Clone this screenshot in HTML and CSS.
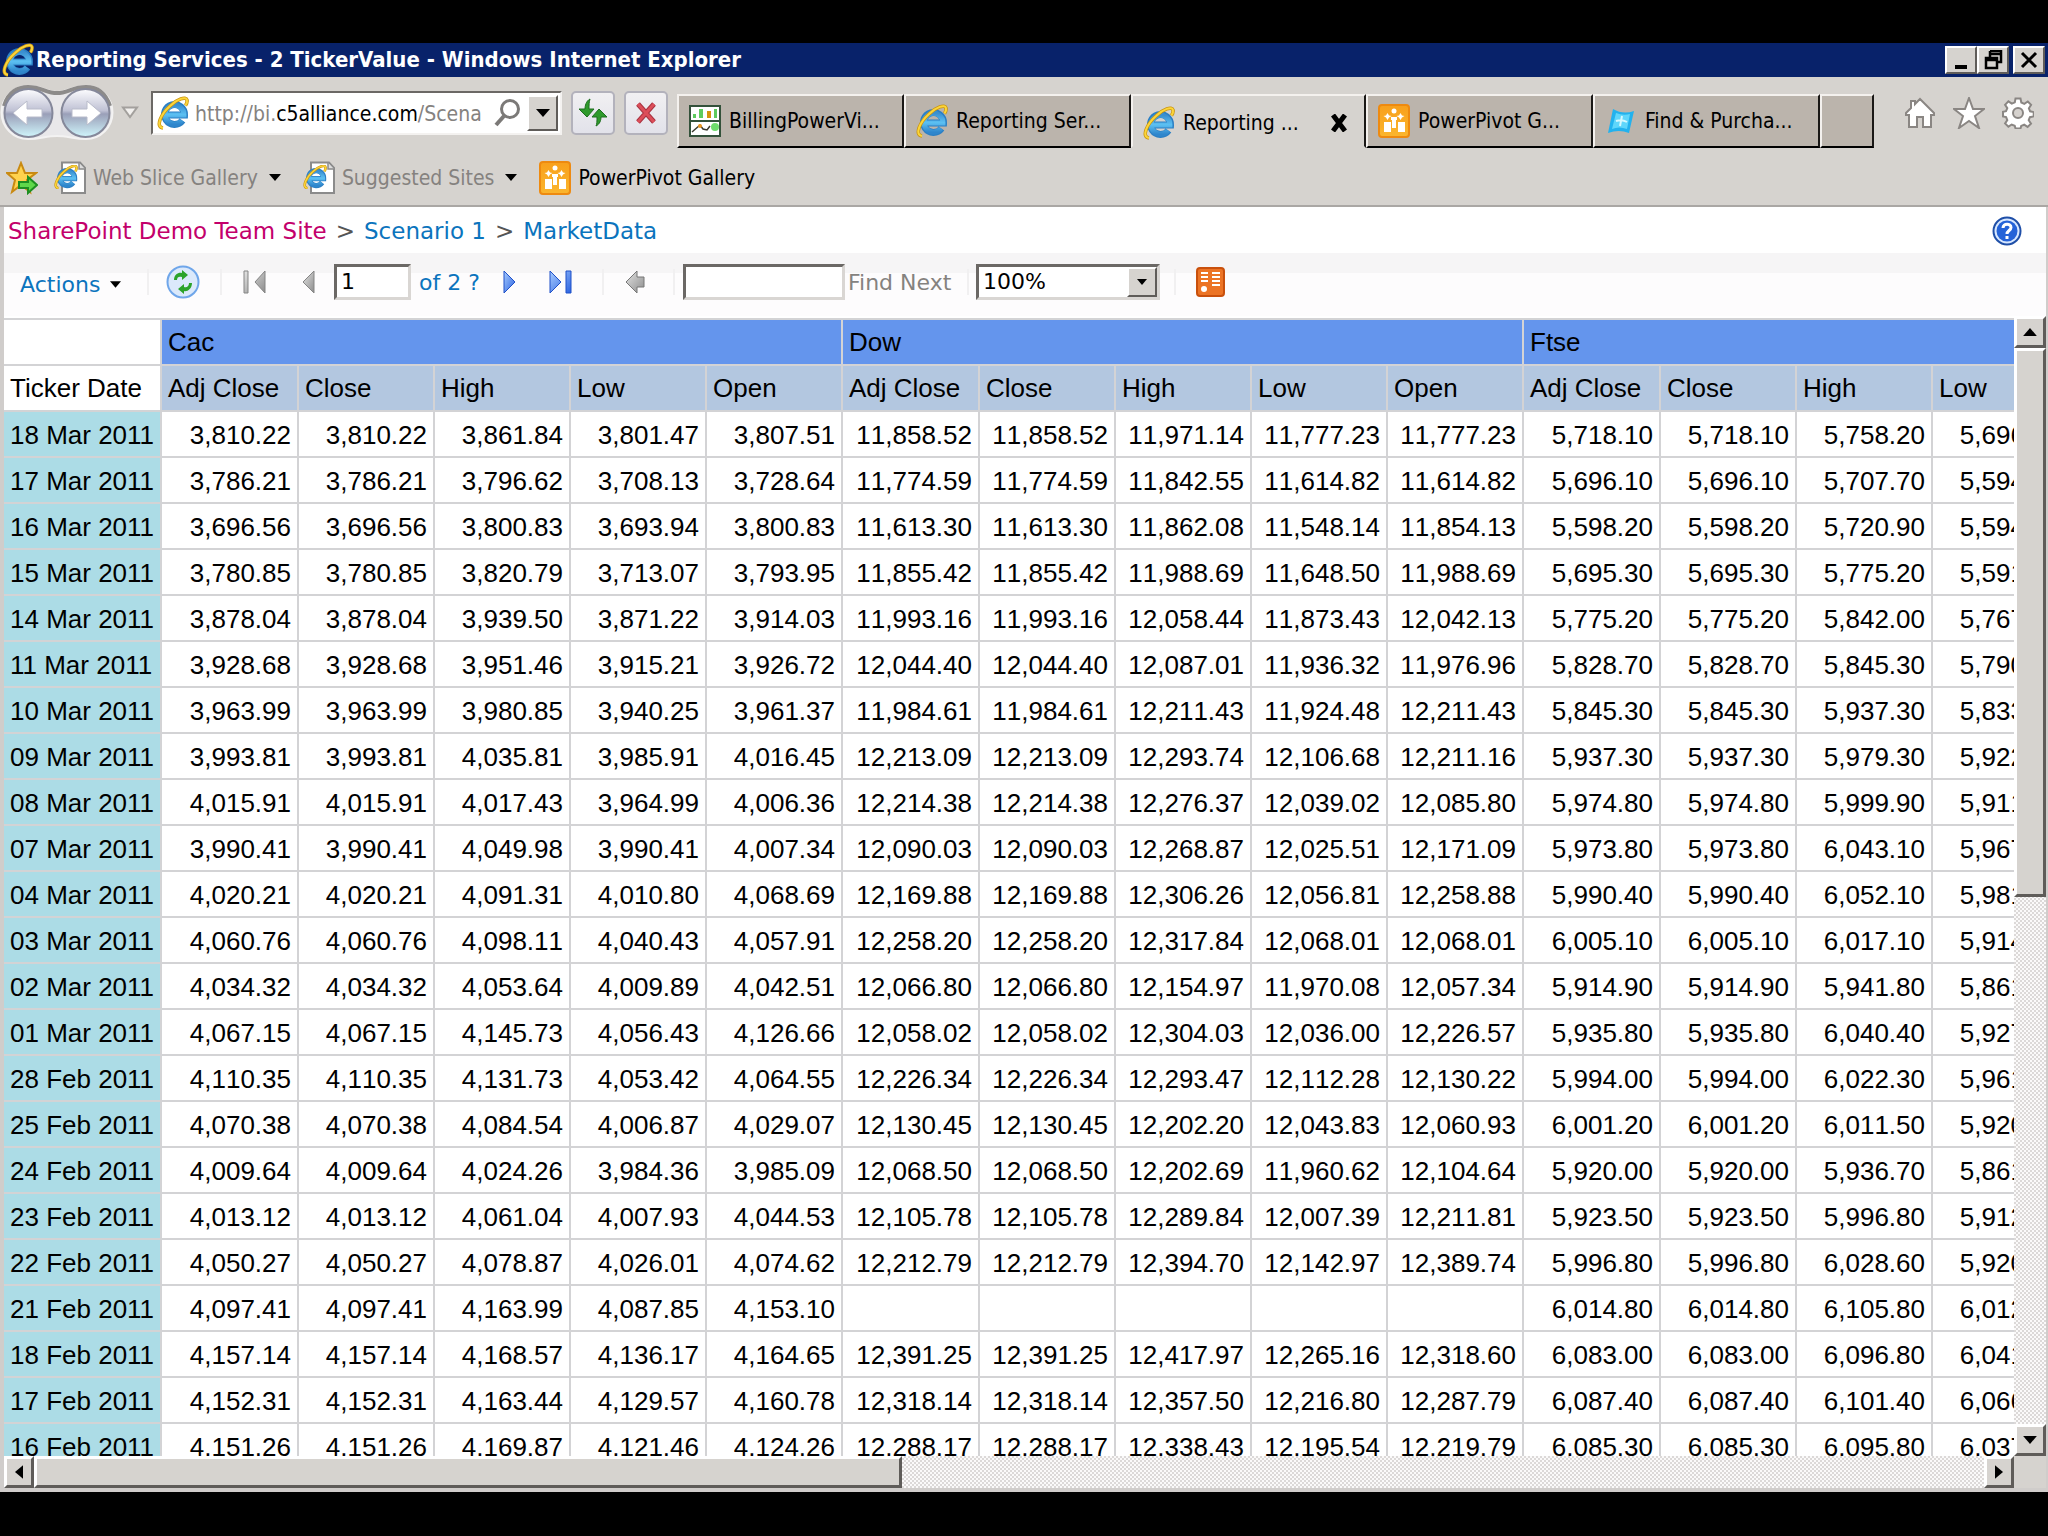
FILE: index.html
```html
<!DOCTYPE html>
<html lang="en">
<head>
<meta charset="utf-8">
<title>Reporting Services - 2 TickerValue - Windows Internet Explorer</title>
<link rel="stylesheet" href="styles.css">
</head>
<body>
<svg class="defs" aria-hidden="true">
  <defs>
    <linearGradient id="blue" x1="0" y1="0" x2="0" y2="1"><stop offset="0" stop-color="#3a8fd0"/><stop offset=".5" stop-color="#5cc0f2"/><stop offset="1" stop-color="#2f86cc"/></linearGradient>
    <linearGradient id="ball" x1="0" y1="0" x2="0" y2="1"><stop offset="0" stop-color="#fdfdff"/><stop offset=".45" stop-color="#bfc1d4"/><stop offset=".52" stop-color="#9a9fb8"/><stop offset="1" stop-color="#d0f6fc"/></linearGradient>
    <linearGradient id="orange" x1="0" y1="0" x2="0" y2="1"><stop offset="0" stop-color="#f8a01c"/><stop offset="1" stop-color="#fbb62e"/></linearGradient>
    <linearGradient id="grey" x1="0" y1="0" x2="1" y2="1"><stop offset="0" stop-color="#e4e4e4"/><stop offset="1" stop-color="#8c8c8c"/></linearGradient>
    <linearGradient id="play" x1="0" y1="0" x2="1" y2="1"><stop offset="0" stop-color="#a8ccff"/><stop offset="1" stop-color="#2a62e0"/></linearGradient>
    <symbol id="ie" viewBox="0 0 32 32">
      <path d="M9 18H27.500A10 10 0 1 0 25.500 23.500" fill="none" stroke="#2b7fc4" stroke-width="7"/>
      <path d="M9 18H27A9.500 9.500 0 1 0 25 23.500" fill="none" stroke="url(#blue)" stroke-width="5"/>
      <path d="M6 31C-2 30 4 17 13 9C20 2 29-1 30 3C30.500 5 29.500 7 28.500 8.500" fill="none" stroke="#c99412" stroke-width="3.500"/>
      <path d="M6 31C-2 30 4 17 13 9C20 2 29-1 30 3C30.500 5 29.500 7 28.500 8.500" fill="none" stroke="#fbd53a" stroke-width="2"/>
    </symbol>
    <symbol id="iepage" viewBox="0 0 32 34">
      <path d="M8 1.500H26L31 7V32H8Z" fill="#fff" stroke="#8b8b8b" stroke-width="2"/><path d="M25 2V8H31" fill="#ddd" stroke="#8b8b8b" stroke-width="1.500"/>
      <svg x="0" y="4" width="24" height="24" viewBox="0 0 32 32"><use href="#ie"/></svg>
    </symbol>
    <symbol id="pivot" viewBox="0 0 32 34">
      <rect x="1" y="1" width="30" height="32" rx="3" fill="url(#orange)" stroke="#ee8a10" stroke-width="2"/>
      <g fill="#fff"><rect x="6" y="18" width="7" height="10"/><rect x="20" y="18" width="7" height="10"/><rect x="14" y="13" width="4" height="11"/><path d="M9.500 9l1.500 2.500 2.500 .5-2.500 1.500-1.500 2.500-1.500-2.500L5.500 12l2.500-.5zM22.500 9l1.500 2.500 2.500 .5-2.500 1.500-1.500 2.500-1.500-2.500-2.500-1.500 2.500-.5z"/><circle cx="16" cy="7" r="2.500"/><path d="M13 13h6v3h-6z"/></g>
    </symbol>
    <symbol id="down" viewBox="0 0 12 7"><path d="M0 0H12L6 7Z"/></symbol>
  </defs>
</svg>

<main class="window">
  <header class="titlebar">
    <svg class="icon-lg"><use href="#ie"/></svg>
    <h1>Reporting Services - 2 TickerValue - Windows Internet Explorer</h1>
    <button class="wbtn" aria-label="Minimize"><svg width="22" height="20" viewBox="0 0 22 20"><path d="M5 15h12v4H5z"/></svg></button>
    <button class="wbtn" aria-label="Restore"><svg width="22" height="20" viewBox="0 0 22 20"><path d="M8 1h11v11h-4M8 4h11M8 1v6M4 8h11v10H4zM4 10h11" fill="none" stroke="#000" stroke-width="2.500"/></svg></button>
    <button class="wbtn last" aria-label="Close"><svg width="22" height="20" viewBox="0 0 22 20"><path d="M4 3L18 17M18 3L4 17" stroke="#000" stroke-width="3"/></svg></button>
  </header>

  <nav class="navbar">
    <svg class="backfwd" viewBox="0 0 114 58" role="img" aria-label="Back and forward">
      <path d="M28 2C42 2 46 8 57 8S72 2 86 2A26 26 0 0 1 86 55C74 55 68 52 57 52S40 55 28 55A26 26 0 0 1 28 2Z" fill="#e9e8ea" stroke="#f3f2f2" stroke-width="2"/>
      <path d="M4 22C8 8 18 3 28 3C42 3 46 9 57 9S72 3 86 3C98 3 106 10 110 22" fill="none" stroke="#8d8b8a" stroke-width="4"/>
      <circle cx="28.500" cy="29" r="24" fill="url(#ball)" stroke="#85889a" stroke-width="2"/>
      <circle cx="85.500" cy="29" r="24" fill="url(#ball)" stroke="#85889a" stroke-width="2"/>
      <path d="M13 29L27 17V25H42V33H27V41Z" fill="#fff" stroke="#b9bccb"/>
      <path d="M101 29L87 17V25H72V33H87V41Z" fill="#fff" stroke="#b9bccb"/>
    </svg>
    <svg class="history" width="18" height="13" viewBox="0 0 18 13"><path d="M2 1.500H16L9 11Z" fill="#f2f0ee" stroke="#a3a09d" stroke-width="2"/></svg>
    <div class="address">
      <svg class="icon-lg"><use href="#ie"/></svg>
      <div class="url" role="textbox" aria-label="Address" contenteditable="true" spellcheck="false">http://bi.<b>c5alliance.com</b>/Scena</div>
      <svg width="28" height="30" viewBox="0 0 28 30"><circle cx="17" cy="11" r="8.500" fill="none" stroke="#7b7977" stroke-width="3"/><path d="M11 18L3 27" stroke="#7b7977" stroke-width="4"/></svg>
      <button class="drop" aria-label="Show addresses"><svg width="14" height="10"><use href="#down"/></svg></button>
    </div>
    <button class="navbtn" aria-label="Refresh"><svg width="30" height="30" viewBox="0 0 30 30" fill="#2f9a2c" stroke="#1d6e1f" stroke-width="1"><path d="M12 1C8 3 7 8 7 11H1L9 19L16 11H11C11 7 11 4 12 1Z"/><path d="M18 28C22 26 23 22 23 19H29L21 11L14 19H19C19 23 19 26 18 28Z"/></svg></button>
    <button class="navbtn" aria-label="Stop"><svg width="24" height="24" viewBox="0 0 24 24"><path d="M4 3L20 21M20 3L4 21" stroke="#a83240" stroke-width="5"/><path d="M4 3L20 21M20 3L4 21" stroke="#dc4e59" stroke-width="3"/></svg></button>
    <div class="tabs" role="tablist">
      <button class="tab" role="tab"><svg class="icon-md" viewBox="0 0 32 32"><rect x="1" y="1" width="30" height="30" fill="#fff" stroke="#33513a" stroke-width="2"/><path d="M1 16H31" stroke="#33513a" stroke-width="2"/><path d="M4 13V9h3v4zM10 13V4h4v9zM25 13V4h3v9z" fill="#5ecb5e"/><path d="M18 13V6h4v7z" fill="#d6930e"/><path d="M3 27L11 20L14 24L18 25L21 21" fill="none" stroke="#3a3a2e" stroke-width="1.500"/><circle cx="11" cy="21" r="2" fill="#ec971e"/><circle cx="26" cy="22" r="4" fill="#6fdc6c"/></svg><span>BillingPowerVi...</span></button>
      <button class="tab" role="tab"><svg class="icon-lg"><use href="#ie"/></svg><span>Reporting Ser...</span></button>
      <button class="tab active" role="tab" aria-selected="true"><svg class="icon-lg"><use href="#ie"/></svg><span>Reporting ...</span><svg class="close" width="18" height="18" viewBox="0 0 18 18"><path d="M3 1L15 17M15 1L3 17" stroke="#000" stroke-width="5"/></svg></button>
      <button class="tab" role="tab"><svg class="icon-lg"><use href="#pivot"/></svg><span>PowerPivot G...</span></button>
      <button class="tab" role="tab"><svg class="icon-lg" viewBox="0 0 32 32"><path d="M8 4Q18 10 29 6L24 28Q14 24 3 28Z" fill="#22b2ee"/><path d="M11 8Q18 11 25 9L22 24Q14 21 7 24Z" fill="#5fd6fb"/><path d="M17 11L15 21M11 16Q17 14 22 17" stroke="#d4f8ff" stroke-width="2" fill="none"/></svg><span>Find &amp; Purcha...</span></button>
      <button class="tab new" role="tab" aria-label="New tab"></button>
    </div>
    <div class="tools">
      <svg viewBox="0 0 32 32"><path d="M16 2L30 16V18H27V30H19V20H13V30H5V18H2V16L7 11V4H11V7Z" fill="#fff" stroke="#8a8683" stroke-width="2"/></svg>
      <svg viewBox="0 0 32 32"><path d="M16 1L20 12H31L22 19L26 31L16 24L6 31L10 19L1 12H12Z" fill="#fff" stroke="#8a8683" stroke-width="2"/></svg>
      <svg viewBox="0 0 32 32"><path d="M13.500 1.500h5l.8 4 3 1.300 3.500-2.300 3.300 3.400-2.200 3.400 1.200 3 3.600.8v4.300l-3.800.8-1.200 3 2.300 3.400-3.400 3.300-3.400-2.200-3 1.200-.7 2.500h-5l-.8-2.700-3-1.200-3.300 2.200-3.300-3.300 2.200-3.300-1.200-3-3.100-.7v-4.500l3-.7 1.300-3-2.200-3.400 3.300-3.400 3.400 2.300 3-1.300z" fill="#fff" stroke="#8a8683" stroke-width="2"/><circle cx="16" cy="16" r="5" fill="#d6d2ce" stroke="#8a8683" stroke-width="2"/></svg>
    </div>
  </nav>

  <nav class="favorites" aria-label="Favorites">
    <svg class="icon-lg" viewBox="0 0 32 32"><path d="M15 1L19 11L30 11L21 18L24 30L15 23L6 30L9 18L1 11L11 11Z" fill="#ffd24d" stroke="#c98a12" stroke-width="2"/><path d="M13 20H22V15L31 23L22 31V26H13Z" fill="#5fd84a" stroke="#1e8f22" stroke-width="2"/></svg>
    <a href="#" class="muted"><svg class="icon-lg"><use href="#iepage"/></svg>Web Slice Gallery<svg class="arrow" width="12" height="7"><use href="#down"/></svg></a>
    <a href="#" class="muted"><svg class="icon-lg"><use href="#iepage"/></svg>Suggested Sites<svg class="arrow" width="12" height="7"><use href="#down"/></svg></a>
    <a href="#"><svg class="icon-lg"><use href="#pivot"/></svg>PowerPivot Gallery</a>
  </nav>

  <section class="page">
    <div class="crumbs">
      <a href="#" class="site">SharePoint Demo Team Site</a><span>&gt;</span><a href="#">Scenario 1</a><span>&gt;</span><a href="#">MarketData</a>
      <svg class="help" width="30" height="30" viewBox="0 0 30 30" role="img" aria-label="Help"><circle cx="15" cy="15" r="13.500" fill="#d8e8ff" stroke="#1f4fa8" stroke-width="2"/><circle cx="15" cy="15" r="10.500" fill="#2563d8"/><path d="M11 12C11 7 19 7 19 11.500C19 14.500 15 14.500 15 18M15 20V23" fill="none" stroke="#fff" stroke-width="3"/></svg>
    </div>
    <div class="toolbar">
      <button class="link actions">Actions<svg width="11" height="7"><use href="#down"/></svg></button>
      <i class="sep"></i>
      <button class="tool reload" aria-label="Reload"><svg width="34" height="34" viewBox="0 0 34 34"><circle cx="17" cy="17" r="15.500" fill="#dbe9fb" stroke="#6fa6ea" stroke-width="2"/><path d="M8 15C8 9 13 7 16 8V5L22 10L16 15V12C13 11 11 12 11 15ZM26 18C26 24 21 27 18 26V29L12 24L18 19V22C21 23 23 21 23 18Z" fill="#2ba32a"/></svg></button>
      <i class="sep"></i>
      <button class="tool first" aria-label="First page"><svg width="24" height="24" viewBox="0 0 24 24" fill="url(#grey)" stroke="#858585"><path d="M1 1H5V23H1ZM22 1V23L12 12Z"/></svg></button>
      <button class="tool prev" aria-label="Previous page"><svg width="13" height="24" viewBox="0 0 13 24" fill="url(#grey)" stroke="#858585"><path d="M12 1V23L1 12Z"/></svg></button>
      <input class="field pageno" type="text" value="1" aria-label="Current page">
      <span class="of">of 2 ?</span>
      <button class="tool next" aria-label="Next page"><svg width="13" height="24" viewBox="0 0 13 24" fill="url(#play)" stroke="#1f50c8"><path d="M1 1V23L12 12Z"/></svg></button>
      <button class="tool end" aria-label="Last page"><svg width="24" height="24" viewBox="0 0 24 24" fill="url(#play)" stroke="#1f50c8"><path d="M1 1V23L12 12ZM17 1H22V23H17Z"/></svg></button>
      <i class="sep"></i>
      <button class="tool parent" aria-label="Parent report"><svg width="20" height="24" viewBox="0 0 20 24"><path d="M1 12L12 1V7H19V17H12V23Z" fill="url(#grey)" stroke="#777"/></svg></button>
      <i class="sep"></i>
      <input class="field find" type="text" aria-label="Find text">
      <span class="findnext">Find Next</span>
      <i class="sep"></i>
      <div class="zoom"><select class="field" aria-label="Zoom"><option>100%</option></select><span class="drop"><svg width="10" height="6"><use href="#down"/></svg></span></div>
      <i class="sep"></i>
      <button class="tool feed" aria-label="Export to data feed"><svg width="29" height="30" viewBox="0 0 29 30"><rect x="1" y="1" width="27" height="28" rx="3" fill="#ec7425" stroke="#c9500c" stroke-width="2"/><path d="M5 6h7M5 10h7M5 14h7M16 6h8M16 10h8M16 14h8M16 18h8" stroke="#fff" stroke-width="2"/><circle cx="8" cy="22" r="3" fill="#fff"/></svg></button>
    </div>

    <div class="report">
      <div class="viewport">
        <table>
          <colgroup><col class="date"><col class="adj"><col span="4"><col class="adj"><col span="4"><col class="adj"><col span="3"></colgroup>
          <thead>
            <tr class="group"><td></td><th colspan="5">Cac</th><th colspan="5">Dow</th><th colspan="4">Ftse</th></tr>
            <tr class="cols"><th>Ticker Date</th><th>Adj Close</th><th>Close</th><th>High</th><th>Low</th><th>Open</th><th>Adj Close</th><th>Close</th><th>High</th><th>Low</th><th>Open</th><th>Adj Close</th><th>Close</th><th>High</th><th>Low</th></tr>
          </thead>
          <tbody>
            <tr><th>18 Mar 2011</th><td>3,810.22</td><td>3,810.22</td><td>3,861.84</td><td>3,801.47</td><td>3,807.51</td><td>11,858.52</td><td>11,858.52</td><td>11,971.14</td><td>11,777.23</td><td>11,777.23</td><td>5,718.10</td><td>5,718.10</td><td>5,758.20</td><td>5,696.10</td></tr>
            <tr><th>17 Mar 2011</th><td>3,786.21</td><td>3,786.21</td><td>3,796.62</td><td>3,708.13</td><td>3,728.64</td><td>11,774.59</td><td>11,774.59</td><td>11,842.55</td><td>11,614.82</td><td>11,614.82</td><td>5,696.10</td><td>5,696.10</td><td>5,707.70</td><td>5,594.20</td></tr>
            <tr><th>16 Mar 2011</th><td>3,696.56</td><td>3,696.56</td><td>3,800.83</td><td>3,693.94</td><td>3,800.83</td><td>11,613.30</td><td>11,613.30</td><td>11,862.08</td><td>11,548.14</td><td>11,854.13</td><td>5,598.20</td><td>5,598.20</td><td>5,720.90</td><td>5,594.20</td></tr>
            <tr><th>15 Mar 2011</th><td>3,780.85</td><td>3,780.85</td><td>3,820.79</td><td>3,713.07</td><td>3,793.95</td><td>11,855.42</td><td>11,855.42</td><td>11,988.69</td><td>11,648.50</td><td>11,988.69</td><td>5,695.30</td><td>5,695.30</td><td>5,775.20</td><td>5,591.60</td></tr>
            <tr><th>14 Mar 2011</th><td>3,878.04</td><td>3,878.04</td><td>3,939.50</td><td>3,871.22</td><td>3,914.03</td><td>11,993.16</td><td>11,993.16</td><td>12,058.44</td><td>11,873.43</td><td>12,042.13</td><td>5,775.20</td><td>5,775.20</td><td>5,842.00</td><td>5,767.00</td></tr>
            <tr><th>11 Mar 2011</th><td>3,928.68</td><td>3,928.68</td><td>3,951.46</td><td>3,915.21</td><td>3,926.72</td><td>12,044.40</td><td>12,044.40</td><td>12,087.01</td><td>11,936.32</td><td>11,976.96</td><td>5,828.70</td><td>5,828.70</td><td>5,845.30</td><td>5,790.50</td></tr>
            <tr><th>10 Mar 2011</th><td>3,963.99</td><td>3,963.99</td><td>3,980.85</td><td>3,940.25</td><td>3,961.37</td><td>11,984.61</td><td>11,984.61</td><td>12,211.43</td><td>11,924.48</td><td>12,211.43</td><td>5,845.30</td><td>5,845.30</td><td>5,937.30</td><td>5,833.20</td></tr>
            <tr><th>09 Mar 2011</th><td>3,993.81</td><td>3,993.81</td><td>4,035.81</td><td>3,985.91</td><td>4,016.45</td><td>12,213.09</td><td>12,213.09</td><td>12,293.74</td><td>12,106.68</td><td>12,211.16</td><td>5,937.30</td><td>5,937.30</td><td>5,979.30</td><td>5,922.70</td></tr>
            <tr><th>08 Mar 2011</th><td>4,015.91</td><td>4,015.91</td><td>4,017.43</td><td>3,964.99</td><td>4,006.36</td><td>12,214.38</td><td>12,214.38</td><td>12,276.37</td><td>12,039.02</td><td>12,085.80</td><td>5,974.80</td><td>5,974.80</td><td>5,999.90</td><td>5,911.10</td></tr>
            <tr><th>07 Mar 2011</th><td>3,990.41</td><td>3,990.41</td><td>4,049.98</td><td>3,990.41</td><td>4,007.34</td><td>12,090.03</td><td>12,090.03</td><td>12,268.87</td><td>12,025.51</td><td>12,171.09</td><td>5,973.80</td><td>5,973.80</td><td>6,043.10</td><td>5,967.30</td></tr>
            <tr><th>04 Mar 2011</th><td>4,020.21</td><td>4,020.21</td><td>4,091.31</td><td>4,010.80</td><td>4,068.69</td><td>12,169.88</td><td>12,169.88</td><td>12,306.26</td><td>12,056.81</td><td>12,258.88</td><td>5,990.40</td><td>5,990.40</td><td>6,052.10</td><td>5,981.30</td></tr>
            <tr><th>03 Mar 2011</th><td>4,060.76</td><td>4,060.76</td><td>4,098.11</td><td>4,040.43</td><td>4,057.91</td><td>12,258.20</td><td>12,258.20</td><td>12,317.84</td><td>12,068.01</td><td>12,068.01</td><td>6,005.10</td><td>6,005.10</td><td>6,017.10</td><td>5,914.90</td></tr>
            <tr><th>02 Mar 2011</th><td>4,034.32</td><td>4,034.32</td><td>4,053.64</td><td>4,009.89</td><td>4,042.51</td><td>12,066.80</td><td>12,066.80</td><td>12,154.97</td><td>11,970.08</td><td>12,057.34</td><td>5,914.90</td><td>5,914.90</td><td>5,941.80</td><td>5,861.90</td></tr>
            <tr><th>01 Mar 2011</th><td>4,067.15</td><td>4,067.15</td><td>4,145.73</td><td>4,056.43</td><td>4,126.66</td><td>12,058.02</td><td>12,058.02</td><td>12,304.03</td><td>12,036.00</td><td>12,226.57</td><td>5,935.80</td><td>5,935.80</td><td>6,040.40</td><td>5,927.20</td></tr>
            <tr><th>28 Feb 2011</th><td>4,110.35</td><td>4,110.35</td><td>4,131.73</td><td>4,053.42</td><td>4,064.55</td><td>12,226.34</td><td>12,226.34</td><td>12,293.47</td><td>12,112.28</td><td>12,130.22</td><td>5,994.00</td><td>5,994.00</td><td>6,022.30</td><td>5,961.50</td></tr>
            <tr><th>25 Feb 2011</th><td>4,070.38</td><td>4,070.38</td><td>4,084.54</td><td>4,006.87</td><td>4,029.07</td><td>12,130.45</td><td>12,130.45</td><td>12,202.20</td><td>12,043.83</td><td>12,060.93</td><td>6,001.20</td><td>6,001.20</td><td>6,011.50</td><td>5,920.00</td></tr>
            <tr><th>24 Feb 2011</th><td>4,009.64</td><td>4,009.64</td><td>4,024.26</td><td>3,984.36</td><td>3,985.09</td><td>12,068.50</td><td>12,068.50</td><td>12,202.69</td><td>11,960.62</td><td>12,104.64</td><td>5,920.00</td><td>5,920.00</td><td>5,936.70</td><td>5,861.70</td></tr>
            <tr><th>23 Feb 2011</th><td>4,013.12</td><td>4,013.12</td><td>4,061.04</td><td>4,007.93</td><td>4,044.53</td><td>12,105.78</td><td>12,105.78</td><td>12,289.84</td><td>12,007.39</td><td>12,211.81</td><td>5,923.50</td><td>5,923.50</td><td>5,996.80</td><td>5,912.40</td></tr>
            <tr><th>22 Feb 2011</th><td>4,050.27</td><td>4,050.27</td><td>4,078.87</td><td>4,026.01</td><td>4,074.62</td><td>12,212.79</td><td>12,212.79</td><td>12,394.70</td><td>12,142.97</td><td>12,389.74</td><td>5,996.80</td><td>5,996.80</td><td>6,028.60</td><td>5,920.80</td></tr>
            <tr><th>21 Feb 2011</th><td>4,097.41</td><td>4,097.41</td><td>4,163.99</td><td>4,087.85</td><td>4,153.10</td><td></td><td></td><td></td><td></td><td></td><td>6,014.80</td><td>6,014.80</td><td>6,105.80</td><td>6,012.60</td></tr>
            <tr><th>18 Feb 2011</th><td>4,157.14</td><td>4,157.14</td><td>4,168.57</td><td>4,136.17</td><td>4,164.65</td><td>12,391.25</td><td>12,391.25</td><td>12,417.97</td><td>12,265.16</td><td>12,318.60</td><td>6,083.00</td><td>6,083.00</td><td>6,096.80</td><td>6,041.10</td></tr>
            <tr><th>17 Feb 2011</th><td>4,152.31</td><td>4,152.31</td><td>4,163.44</td><td>4,129.57</td><td>4,160.78</td><td>12,318.14</td><td>12,318.14</td><td>12,357.50</td><td>12,216.80</td><td>12,287.79</td><td>6,087.40</td><td>6,087.40</td><td>6,101.40</td><td>6,066.40</td></tr>
            <tr><th>16 Feb 2011</th><td>4,151.26</td><td>4,151.26</td><td>4,169.87</td><td>4,121.46</td><td>4,124.26</td><td>12,288.17</td><td>12,288.17</td><td>12,338.43</td><td>12,195.54</td><td>12,219.79</td><td>6,085.30</td><td>6,085.30</td><td>6,095.80</td><td>6,037.10</td></tr>
          </tbody>
        </table>
      </div>
      <div class="scroll vertical">
        <button aria-label="Scroll up"><svg width="14" height="8" viewBox="0 0 12 7"><path d="M0 7H12L6 0Z"/></svg></button>
        <div class="track"><div class="thumb"></div></div>
        <button aria-label="Scroll down"><svg width="14" height="8" viewBox="0 0 12 7"><path d="M0 0H12L6 7Z"/></svg></button>
      </div>
      <div class="scroll horizontal">
        <button aria-label="Scroll left"><svg width="8" height="14" viewBox="0 0 7 12"><path d="M7 0V12L0 6Z"/></svg></button>
        <div class="track"><div class="thumb"></div></div>
        <button aria-label="Scroll right"><svg width="8" height="14" viewBox="0 0 7 12"><path d="M0 0V12L7 6Z"/></svg></button>
      </div>
    </div>
  </section>
</main>
</body>
</html>
```
FILE: styles.css
```css
* { box-sizing: border-box; }

body {
  margin: 0;
  height: 100vh;
  padding: 43px 0 44px;
  background: #000;
  font-family: "DejaVu Sans Condensed", "Noto Sans", sans-serif;
  font-size: 21px;
  color: #000;
  overflow: hidden;
}

button { font: inherit; color: inherit; padding: 0; border: 0; background: none; }
a { color: inherit; text-decoration: none; }
svg { display: block; flex: none; }
.defs { position: absolute; width: 0; height: 0; }
.icon-lg { width: 32px; height: 34px; }
.icon-md { width: 32px; height: 32px; }

.window {
  height: 100%;
  display: flex;
  flex-direction: column;
  background: #d6d3cf;
}

/* Title bar */
.titlebar {
  height: 34px;
  display: flex;
  align-items: center;
  padding: 0 3px 0 2px;
  background: #08226a;
  color: #fff;
}
.titlebar h1 {
  flex: 1;
  margin: 0;
  padding-left: 2px;
  font-size: 22px;
  line-height: 30px;
  font-weight: bold;
  white-space: nowrap;
}
.wbtn, .drop, .scroll button, .thumb {
  background: #d6d3cf;
  border: 2px solid;
  border-color: #fff #5f5c59 #5f5c59 #fff;
}
.wbtn { width: 32px; height: 28px; display: grid; place-items: center; }
.wbtn.last { margin-left: 4px; }

/* Navigation row */
.navbar {
  height: 71px;
  display: flex;
  align-items: center;
}
.backfwd { width: 114px; height: 58px; }
.history { margin: 0 20px 0 7px; width: 18px; }
.address {
  width: 411px;
  height: 44px;
  margin: 0 9px 0 -8px;
  display: flex;
  align-items: center;
  gap: 6px;
  padding: 0 2px 0 4px;
  background: #fff;
  border: 2px solid;
  border-color: #6b6865 #f4f2f0 #f4f2f0 #6b6865;
}
.url { flex: 1; padding-top: 3px; overflow: hidden; white-space: nowrap; color: #85827f; }
.url b { font-weight: normal; color: #000; }
.address .drop { width: 31px; height: 36px; display: grid; place-items: center; }
.navbtn {
  width: 44px;
  height: 44px;
  margin-right: 9px;
  display: grid;
  place-items: center;
  border: 2px solid #b3b2bc;
  border-radius: 5px;
  background: linear-gradient(#f1f0f2, #e2e2ea);
}
.tabs { flex: 1; align-self: flex-end; display: flex; height: 54px; }
.tab {
  flex: 1;
  min-width: 0;
  display: flex;
  align-items: center;
  gap: 8px;
  padding: 0 8px 0 10px;
  background: #bbb4ac;
  border: 2px solid;
  border-color: #f4f1ee #1a1816 #000 #f4f1ee;
  white-space: nowrap;
  text-align: left;
}
.tab span { flex: 1; }
.tab.active { background: #d6d3cf; border-bottom-color: #d6d3cf; padding: 3px 16px 0 10px; }
.tab.new { flex: 0 0 54px; }
.tools { display: flex; gap: 17px; margin: 0 14px 0 30px; padding-bottom: 0; }
.tools svg { width: 32px; height: 32px; }

/* Favorites row */
.favorites {
  height: 59px;
  display: flex;
  align-items: center;
  gap: 16px;
  padding: 2px 6px 0;
  border-bottom: 2px solid #aaa7a4;
}
.favorites a { display: flex; align-items: center; gap: 7px; white-space: nowrap; }
.favorites .muted { color: #85827f; margin-right: 6px; }
.arrow { margin-left: 4px; fill: #000; }

/* Page */
.page {
  flex: 1;
  min-height: 0;
  display: flex;
  flex-direction: column;
  padding-top: 2px;
  border: solid #d0cdcb;
  border-width: 0 2px 4px 4px;
  background: #fff;
}
.crumbs, .toolbar { font-family: "DejaVu Sans", sans-serif; }
.crumbs {
  height: 44px;
  display: flex;
  align-items: center;
  gap: 9px;
  padding: 0 24px 0 4px;
  font-size: 23px;
  color: #555;
}
.crumbs a { color: #0b74bd; }
.crumbs .site { color: #c3006b; }
.help { margin-left: auto; }

.toolbar {
  height: 63px;
  display: flex;
  align-items: center;
  padding: 0 0 6px 16px;
  font-size: 22px;
  white-space: nowrap;
  background: linear-gradient(#f6f5f6 20px, #fdfcfd 20px);
}
.sep { width: 2px; height: 26px; background: #f1f0f1; }
.link, .of { color: #0b74bd; }
.actions { display: flex; align-items: center; gap: 10px; width: 127px; padding-top: 6px; }
.actions svg { fill: #000; }
.reload { margin: 0 20px 0 17px; }
.first { margin: 0 35px 0 21px; }
.prev { margin-right: 19px; }
.of { width: 83px; padding: 2px 0 0 8px; }
.next { margin: 0 33px 0 9px; }
.end { margin-right: 29px; }
.parent { margin: 0 28px 0 21px; }
.findnext { width: 122px; padding: 2px 0 0 3px; color: #85827f; }
.feed { margin-left: 20px; }
.field {
  height: 36px;
  margin: 0;
  padding: 0 4px;
  font: inherit;
  color: #000;
  background: #fff;
  border: 3px solid;
  border-color: #6b6865 #d9d6d3 #d9d6d3 #6b6865;
  border-radius: 0;
  appearance: none;
}
.pageno { width: 77px; }
.find { width: 162px; margin-left: 8px; }
.zoom { position: relative; margin: 0 14px 0 7px; }
.zoom select { width: 184px; display: block; }
.zoom .drop {
  position: absolute;
  top: 3px;
  right: 3px;
  width: 30px;
  height: 30px;
  display: grid;
  place-items: center;
  pointer-events: none;
}

/* Report */
.report {
  flex: 1;
  min-height: 0;
  display: grid;
  grid-template: 1fr 32px / 1fr 32px;
  background: #d6d3cf;
}
.viewport { overflow: hidden; padding-top: 2px; background: #fff; min-height: 0; min-width: 0; }
table {
  table-layout: fixed;
  width: 2065px;
  border-collapse: separate;
  border-spacing: 0;
  border-top: 2px solid #d3d3d5;
  font-family: "Liberation Sans", Arial, sans-serif;
  font-size: 26px;
  line-height: 30px;
  white-space: nowrap;
}
col { width: 136px; }
col.adj { width: 137px; }
col.date { width: 158px; }
th, td {
  height: 46px;
  padding: 1px 6px 0;
  border: solid #d3d3d5;
  border-width: 0 2px 2px 0;
  font-weight: normal;
}
th { text-align: left; }
td { text-align: right; }
thead th { padding: 0 6px 1px; }
.group th { background: #6495ed; }
.cols th { background: #b3c7e0; }
.cols th:first-child { background: #fff; }
tbody th { background: #acdce6; }
tbody td { font-kerning: none; }

/* Scroll bars */
.scroll { display: flex; min-height: 0; min-width: 0; }
.scroll button { flex: none; width: 32px; height: 32px; display: grid; place-items: center; border-width: 3px; }
.scroll .thumb { border-width: 3px; }
.track { flex: 1; background: repeating-conic-gradient(#dcd9d8 0 25%, #fbfafa 0 50%) 0 0 / 4px 4px; }
.vertical { flex-direction: column; }
.vertical .thumb { height: 51%; }
.horizontal button { width: 30px; }
.horizontal .thumb { width: 44.5%; height: 100%; }
```
